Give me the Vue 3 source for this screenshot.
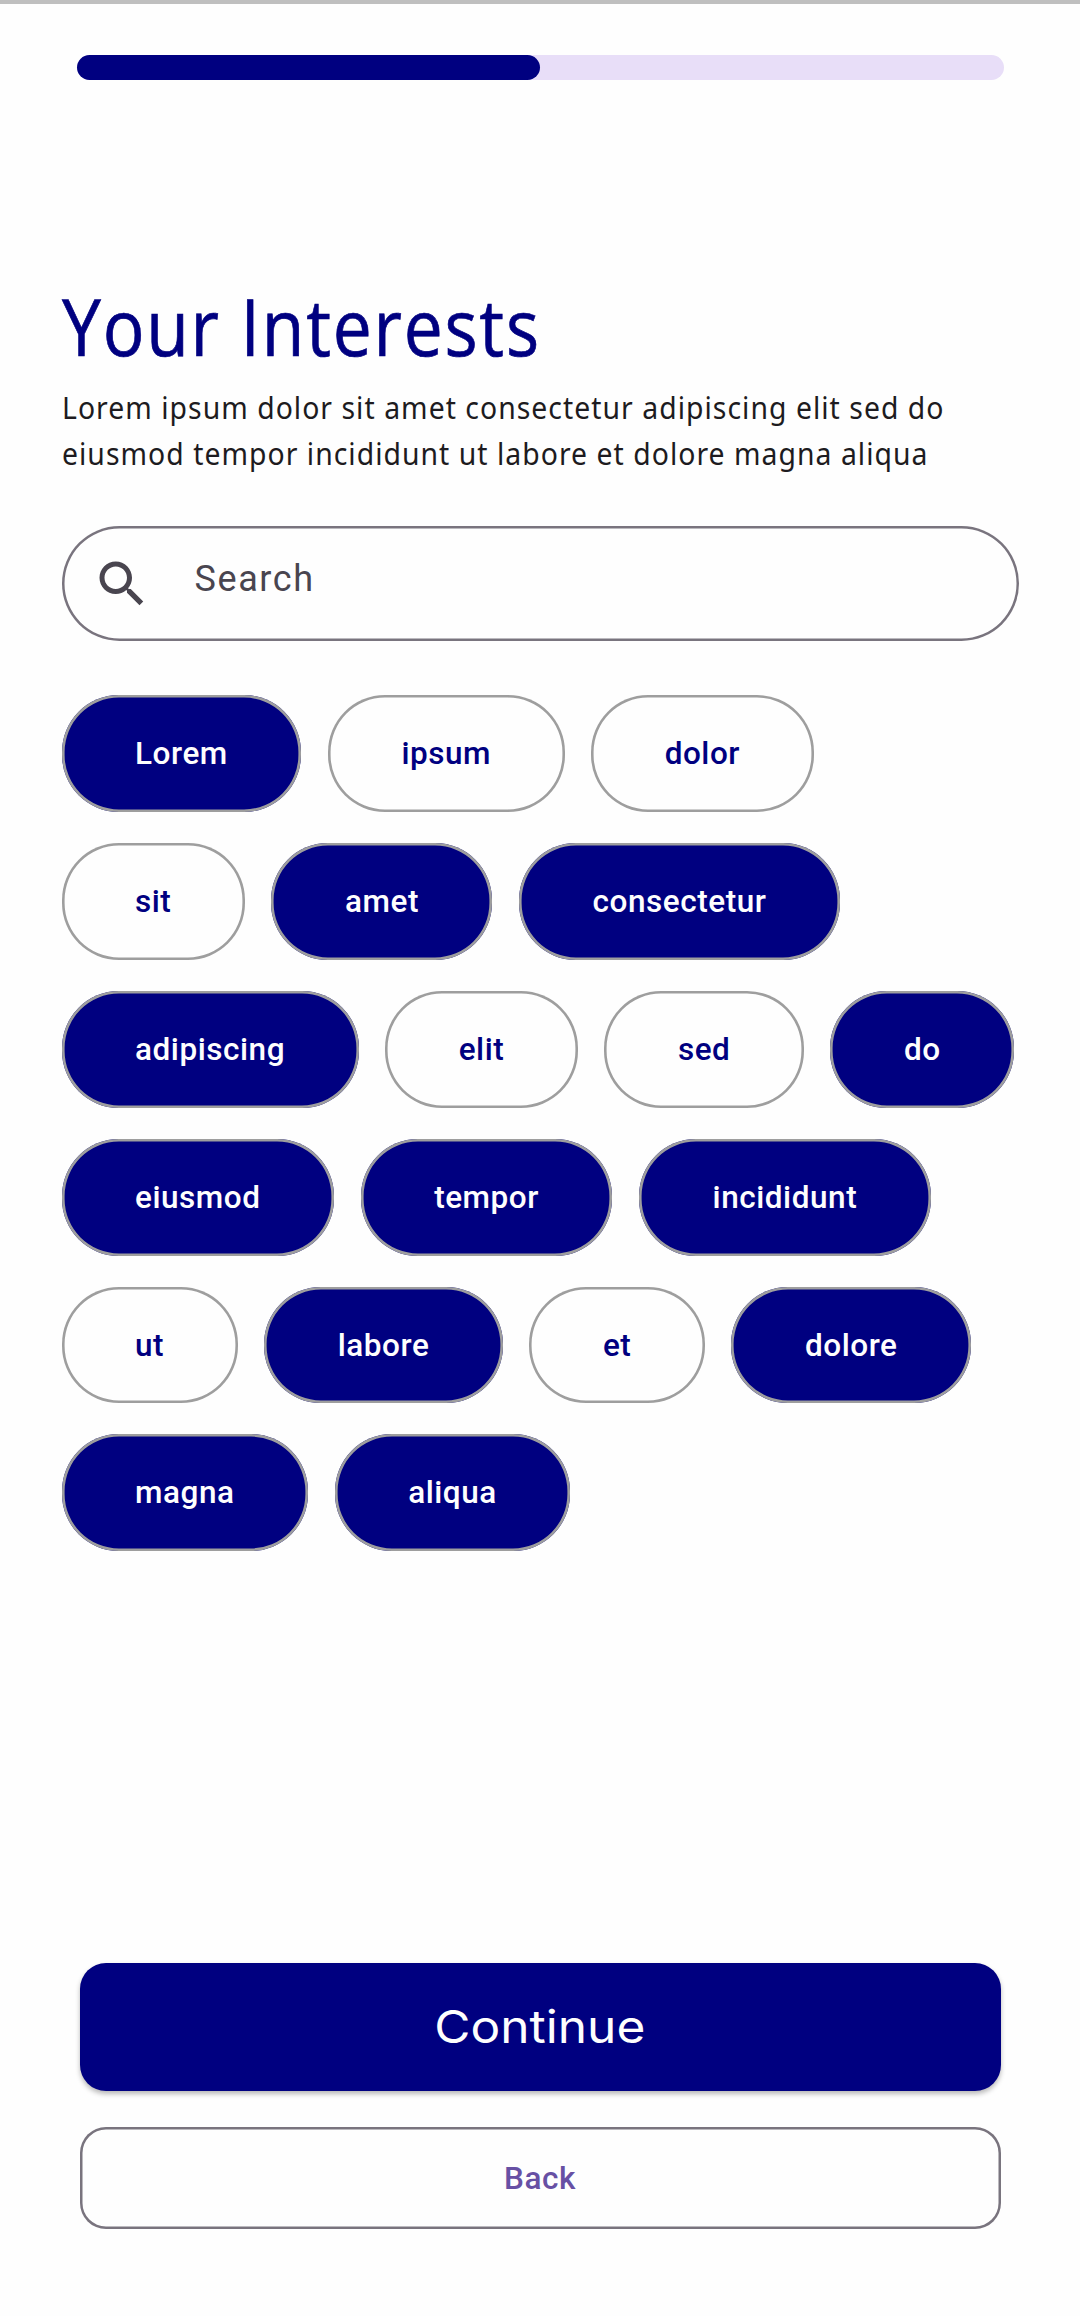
<script setup>
import { reactive } from 'vue'

const progress = 50

const intro = [
  'Lorem ipsum dolor sit amet consectetur adipiscing elit sed do',
  'eiusmod tempor incididunt ut labore et dolore magna aliqua',
]

const rows = reactive([
  [
    { label: 'Lorem', on: true },
    { label: 'ipsum', on: false },
    { label: 'dolor', on: false },
  ],
  [
    { label: 'sit', on: false },
    { label: 'amet', on: true },
    { label: 'consectetur', on: true },
  ],
  [
    { label: 'adipiscing', on: true },
    { label: 'elit', on: false },
    { label: 'sed', on: false },
    { label: 'do', on: true },
  ],
  [
    { label: 'eiusmod', on: true },
    { label: 'tempor', on: true },
    { label: 'incididunt', on: true },
  ],
  [
    { label: 'ut', on: false },
    { label: 'labore', on: true },
    { label: 'et', on: false },
    { label: 'dolore', on: true },
  ],
  [
    { label: 'magna', on: true },
    { label: 'aliqua', on: true },
  ],
])
</script>

<template>
  <main class="screen">
    <div class="track">
      <div class="fill" :style="{ width: progress + '%' }"></div>
    </div>

    <h1 class="title"><span>Your Interests</span></h1>
    <p class="intro">
      <span v-for="line in intro" :key="line" class="line">{{ line }}</span>
    </p>

    <div class="search">
      <svg class="search-icon" viewBox="0 0 24 24" aria-hidden="true">
        <path
          d="M15.5 14h-.79l-.28-.27C15.41 12.59 16 11.11 16 9.5 16 5.91 13.09 3 9.5 3S3 5.91 3 9.5 5.91 16 9.5 16c1.61 0 3.09-.59 4.23-1.57l.27.28v.79l5 4.99L20.49 19l-4.99-5zm-6 0C7.01 14 5 11.99 5 9.5S7.01 5 9.5 5 14 7.01 14 9.5 11.99 14 9.5 14z"
        />
      </svg>
      <span class="hint">Search</span>
    </div>

    <div class="chips">
      <div v-for="(row, i) in rows" :key="i" class="row">
        <button
          v-for="chip in row"
          :key="chip.label"
          class="chip"
          :class="{ on: chip.on }"
          @click="chip.on = !chip.on"
        >
          {{ chip.label }}
        </button>
      </div>
    </div>

    <footer class="actions">
      <button class="continue"><span>Continue</span></button>
      <button class="back">Back</button>
    </footer>
  </main>
</template>

<style>
body {
  margin: 0;
  background: #fefefe;
}
</style>

<style scoped>
.screen {
  box-sizing: border-box;
  width: 1080px;
  height: 2316px;
  padding: 51px 61.5px 87px;
  border-top: 4px solid #bfbfbf;
  background: #fefefe;
  display: flex;
  flex-direction: column;
  font-family: Roboto, 'Liberation Sans', sans-serif;
  overflow: hidden;
}

button {
  margin: 0;
  font-family: inherit;
  box-sizing: border-box;
}

.track {
  margin: 0 15px;
  height: 25px;
  border-radius: 12.5px;
  background: #e8def8;
  flex: none;
}

.fill {
  height: 100%;
  border-radius: 12.5px;
  background: #000080;
}

.title {
  margin: 191px 0 0;
  height: 110px;
  line-height: 110px;
  font-family: 'Open Sans', sans-serif;
  font-size: 79px;
  font-weight: 400;
  letter-spacing: 2px;
  -webkit-text-stroke: 0.7px #000080;
  color: #000080;
  white-space: nowrap;
}

.title span {
  display: inline-block;
  transform: scaleX(0.88);
  transform-origin: 0 50%;
}

.intro {
  margin: 3px 0 0;
  font-family: 'Noto Sans', sans-serif;
  font-size: 31.5px;
  line-height: 46px;
  letter-spacing: 1.15px;
  color: #1d1b20;
}

.line {
  display: block;
  width: max-content;
  white-space: nowrap;
  transform: scaleX(0.9);
  transform-origin: 0 50%;
}

.search {
  box-sizing: border-box;
  margin-top: 50px;
  width: 957px;
  height: 115px;
  flex: none;
  box-shadow: inset 0 0 0 2.5px #79747e;
  border-radius: 57.5px;
  display: flex;
  align-items: center;
  padding-left: 30.5px;
}

.search-icon {
  width: 60px;
  height: 60px;
  fill: #49454f;
}

.hint {
  margin: -10px 0 0 42.5px;
  font-size: 36px;
  line-height: 54px;
  letter-spacing: 1.6px;
  color: #49454f;
}

.chips {
  margin-top: 54px;
  display: flex;
  flex-direction: column;
  gap: 31px;
}

.row {
  display: flex;
  gap: 26.6px;
}

.chip {
  height: 116.9px;
  padding: 0 73.5px;
  border: 0;
  box-shadow: inset 0 0 0 2.6px #9e9e9e;
  border-radius: 57px;
  background: transparent;
  font-size: 31.5px;
  font-weight: 500;
  letter-spacing: 0.55px;
  color: #000080;
  white-space: nowrap;
}

.chip.on {
  background: #000080;
  color: #fefefe;
}

.actions {
  margin: auto 18px 0;
  display: flex;
  flex-direction: column;
  gap: 36px;
}

.continue {
  height: 128px;
  border: 0;
  border-radius: 26px;
  background: #000080;
  box-shadow: 0 3px 5px rgba(0, 0, 0, 0.28);
  font-family: Inter, sans-serif;
  font-size: 45.5px;
  font-weight: 400;
  color: #fefefe;
}

.continue span {
  display: inline-block;
  padding-bottom: 2px;
  transform: scaleX(1.09);
}

.back {
  height: 102px;
  border: 0;
  box-shadow: inset 0 0 0 2.5px #79747e;
  border-radius: 26px;
  background: transparent;
  font-size: 31.5px;
  font-weight: 500;
  letter-spacing: 0.6px;
  color: #6750a4;
}
</style>
